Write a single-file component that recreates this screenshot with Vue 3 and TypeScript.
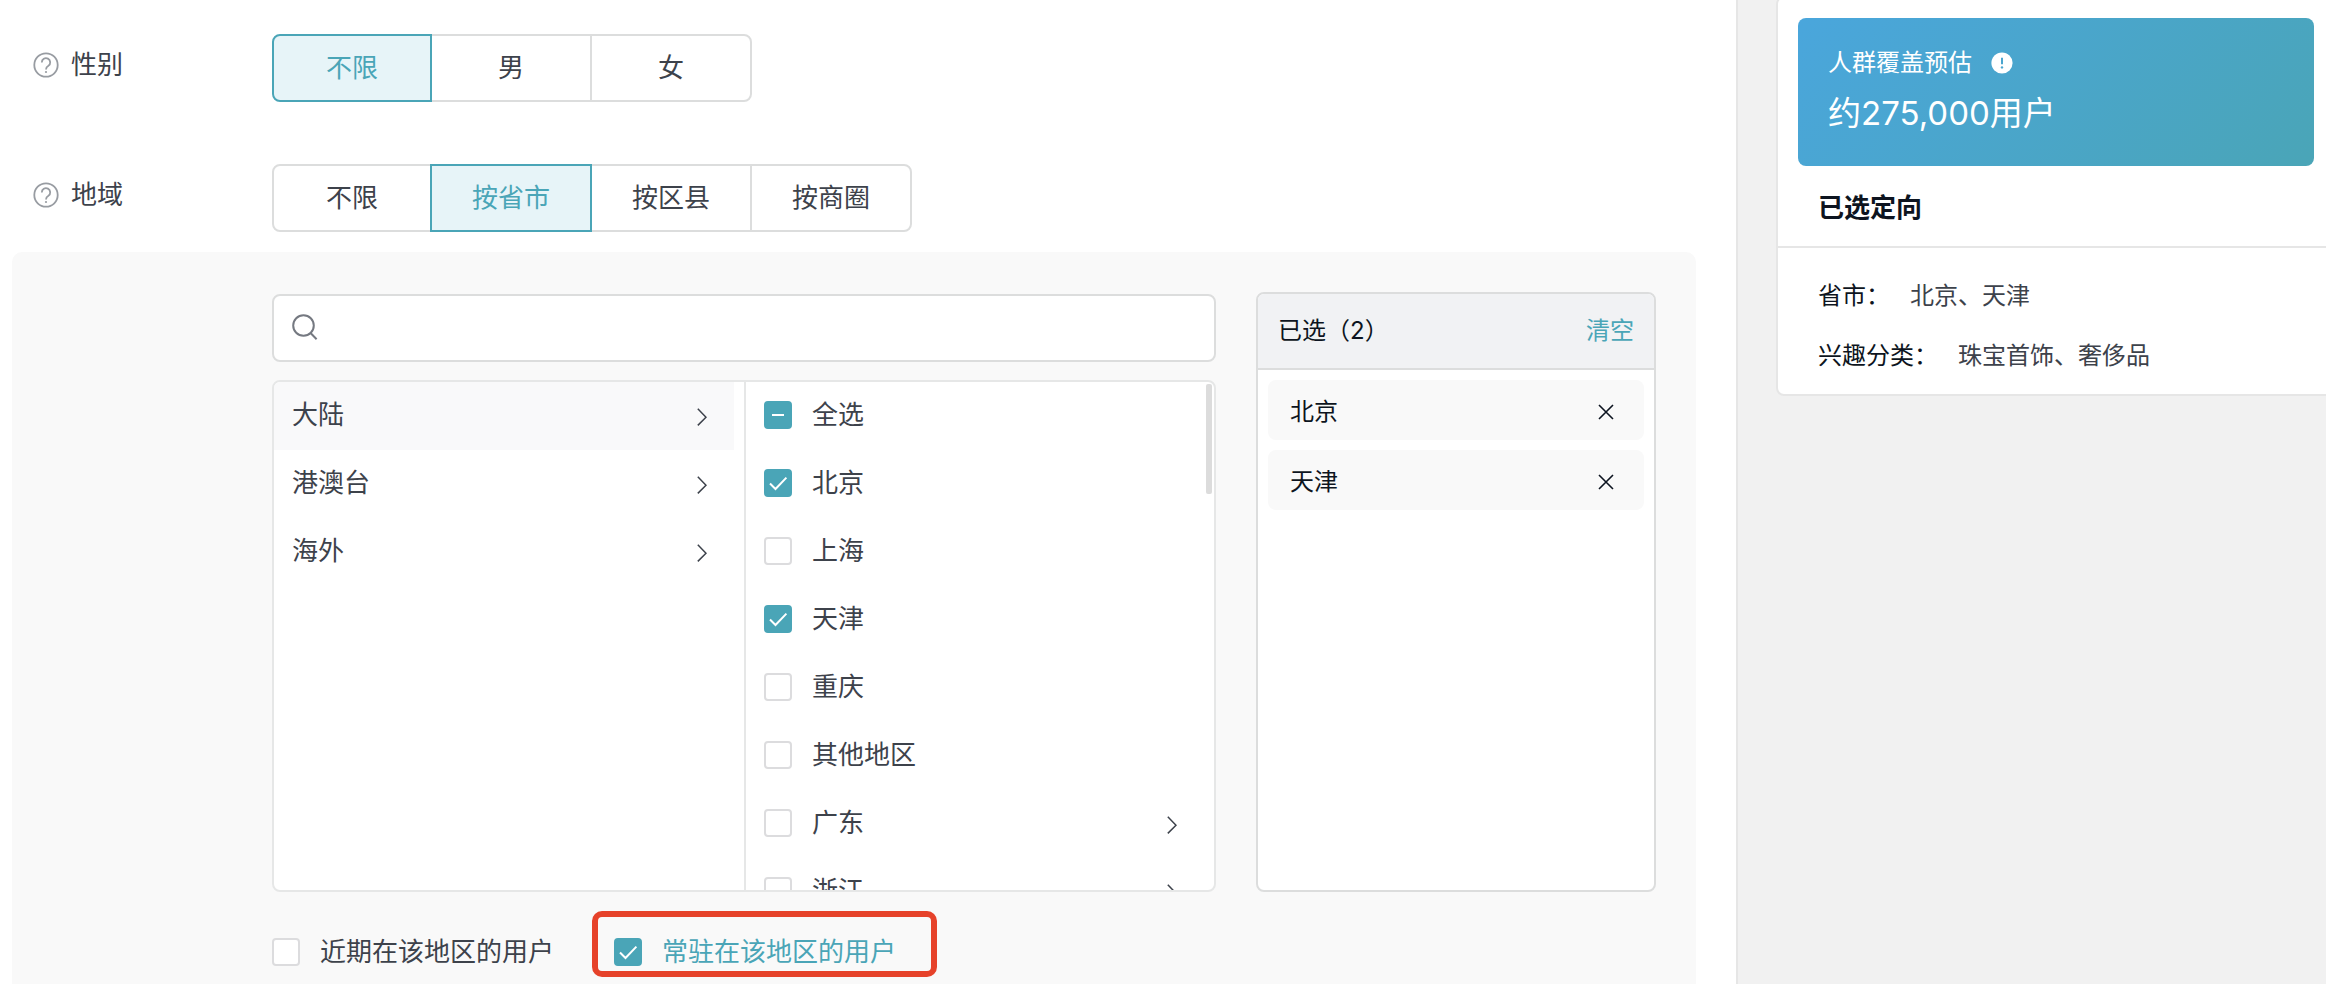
<script setup lang="ts">
import { computed, ref } from 'vue'

interface Region {
  name: string
  children?: boolean
}

const genders: string[] = ['不限', '男', '女']
const scopes: string[] = ['不限', '按省市', '按区县', '按商圈']
const areas: string[] = ['大陆', '港澳台', '海外']
const regions: Region[] = [
  { name: '北京' },
  { name: '上海' },
  { name: '天津' },
  { name: '重庆' },
  { name: '其他地区' },
  { name: '广东', children: true },
  { name: '浙江', children: true },
]

const gender = ref('不限')
const scope = ref('按省市')
const area = ref('大陆')
const keyword = ref('')
const selected = ref<string[]>(['北京', '天津'])
const recent = ref(false)
const resident = ref(true)

const allSelected = computed(() => selected.value.length === regions.length)
const partlySelected = computed(() => selected.value.length > 0 && !allSelected.value)

function toggleAll() {
  selected.value = allSelected.value ? [] : regions.map((r) => r.name)
}
function remove(name: string) {
  selected.value = selected.value.filter((n) => n !== name)
}
</script>

<template>
  <div class="page">
    <main class="main">
      <section class="field">
        <div class="field-label">
          <svg class="help" viewBox="0 0 26 26" aria-hidden="true">
            <circle cx="13" cy="13" r="11.7" />
            <path d="M8.8 10.4a4.2 4.2 0 1 1 6.6 3.4c-1.6 1-2.4 1.8-2.4 3.6" />
            <circle class="dot" cx="13" cy="20" r="1.1" />
          </svg>
          <span>性别</span>
        </div>
        <div class="segments" role="group" aria-label="性别">
          <button
            v-for="g in genders"
            :key="g"
            type="button"
            class="segment"
            :class="{ active: g === gender }"
            @click="gender = g"
          >{{ g }}</button>
        </div>
      </section>

      <section class="field">
        <div class="field-label">
          <svg class="help" viewBox="0 0 26 26" aria-hidden="true">
            <circle cx="13" cy="13" r="11.7" />
            <path d="M8.8 10.4a4.2 4.2 0 1 1 6.6 3.4c-1.6 1-2.4 1.8-2.4 3.6" />
            <circle class="dot" cx="13" cy="20" r="1.1" />
          </svg>
          <span>地域</span>
        </div>
        <div class="segments" role="group" aria-label="地域">
          <button
            v-for="s in scopes"
            :key="s"
            type="button"
            class="segment"
            :class="{ active: s === scope }"
            @click="scope = s"
          >{{ s }}</button>
        </div>
      </section>

      <section class="panel">
        <div class="pickers">
          <div class="picker">
            <div class="search">
              <svg class="search-icon" viewBox="0 0 26 26" aria-hidden="true">
                <circle cx="11.5" cy="11.5" r="10.3" />
                <path d="M18.8 19.2l5.8 6" />
              </svg>
              <input v-model="keyword" type="text" aria-label="搜索地区" />
            </div>

            <div class="cascader">
              <ul class="column">
                <li v-for="a in areas" :key="a">
                  <button type="button" class="row area" :class="{ active: a === area }" @click="area = a">
                    <span class="row-text">{{ a }}</span>
                    <svg class="chevron" viewBox="0 0 10 18" aria-hidden="true"><path d="M.8 .8L9 9.2L.8 17.4" /></svg>
                  </button>
                </li>
              </ul>
              <ul class="column">
                <li class="row">
                  <label class="check">
                    <span class="box">
                      <input
                        type="checkbox"
                        :checked="allSelected"
                        :indeterminate="partlySelected"
                        @change="toggleAll"
                      />
                      <svg viewBox="0 0 28 28" aria-hidden="true">
                        <path v-if="partlySelected" d="M8 14H20" />
                        <path v-else-if="allSelected" d="M6 14.5l5.5 5.5L22.4 8.6" />
                      </svg>
                    </span>
                    <span>全选</span>
                  </label>
                </li>
                <li v-for="r in regions" :key="r.name" class="row">
                  <label class="check">
                    <span class="box">
                      <input v-model="selected" type="checkbox" :value="r.name" />
                      <svg viewBox="0 0 28 28" aria-hidden="true">
                        <path v-if="selected.includes(r.name)" d="M6 14.5l5.5 5.5L22.4 8.6" />
                      </svg>
                    </span>
                    <span>{{ r.name }}</span>
                  </label>
                  <svg v-if="r.children" class="chevron" viewBox="0 0 10 18" aria-hidden="true"><path d="M.8 .8L9 9.2L.8 17.4" /></svg>
                </li>
              </ul>
              <span class="thumb"></span>
            </div>
          </div>

          <div class="chosen">
            <header class="chosen-head">
              <span>已选（{{ selected.length }}）</span>
              <button type="button" class="clear" @click="selected = []">清空</button>
            </header>
            <ul class="chosen-list">
              <li v-for="n in selected" :key="n" class="chosen-item">
                <span>{{ n }}</span>
                <button type="button" class="remove" :aria-label="'移除' + n" @click="remove(n)">
                  <svg viewBox="0 0 16 16" aria-hidden="true"><path d="M1 1L15 15M15 1L1 15" /></svg>
                </button>
              </li>
            </ul>
          </div>
        </div>

        <div class="options">
          <label class="check">
            <span class="box">
              <input v-model="recent" type="checkbox" />
              <svg viewBox="0 0 28 28" aria-hidden="true"><path v-if="recent" d="M6 14.5l5.5 5.5L22.4 8.6" /></svg>
            </span>
            <span>近期在该地区的用户</span>
          </label>
          <label class="check marked" :class="{ on: resident }">
            <span class="box">
              <input v-model="resident" type="checkbox" />
              <svg viewBox="0 0 28 28" aria-hidden="true"><path v-if="resident" d="M6 14.5l5.5 5.5L22.4 8.6" /></svg>
            </span>
            <span>常驻在该地区的用户</span>
          </label>
        </div>
      </section>
    </main>

    <aside class="side">
      <div class="card">
        <div class="banner">
          <div class="banner-title">
            <span>人群覆盖预估</span>
            <svg class="info" viewBox="0 0 22 22" aria-hidden="true">
              <circle cx="11" cy="11" r="10.6" fill="#fff" />
              <path d="M11 5.8v6.4" stroke="#4ba5cf" stroke-width="2" />
              <circle cx="11" cy="15.4" r="1.2" fill="#4ba5cf" />
            </svg>
          </div>
          <div class="banner-value">约275,000用户</div>
        </div>
        <h2 class="card-title">已选定向</h2>
        <dl class="facts">
          <div class="fact">
            <dt>省市：</dt>
            <dd>{{ selected.join('、') }}</dd>
          </div>
          <div class="fact">
            <dt>兴趣分类：</dt>
            <dd>珠宝首饰、奢侈品</dd>
          </div>
        </dl>
      </div>
    </aside>
  </div>
</template>

<style>
body {
  margin: 0;
  background: #f1f1f1;
}
</style>

<style scoped>
.page {
  display: flex;
  min-height: 100vh;
  overflow: hidden;
  font-family: Inter, 'Noto Sans CJK SC', sans-serif;
  font-size: 26px;
  line-height: 36px;
  color: #3d424b;
}
.page * {
  box-sizing: border-box;
}
button,
input {
  font: inherit;
  color: inherit;
}
button {
  padding: 0;
  border: 0;
  background: none;
  cursor: pointer;
}
ul {
  margin: 0;
  padding: 0;
  list-style: none;
}
svg {
  fill: none;
  flex: none;
}

.main {
  flex: 1;
  display: flex;
  flex-direction: column;
  min-width: 0;
  padding: 34px 40px 0 12px;
  background: #fff;
}
.field {
  display: flex;
  height: 68px;
  margin-bottom: 62px;
}
.field + .field {
  margin-bottom: 20px;
}
.field-label {
  display: flex;
  align-items: center;
  gap: 12px;
  width: 260px;
  padding: 0 0 6px 21px;
}
.help {
  width: 26px;
  height: 26px;
  stroke: #989ca2;
  stroke-width: 1.8;
}
.help .dot {
  fill: #989ca2;
  stroke: none;
}
.segments {
  display: flex;
}
.segment {
  width: 162px;
  margin-left: -2px;
  border: 2px solid #dcdddd;
  background: #fff;
}
.segment:first-child {
  width: 160px;
  margin-left: 0;
  border-radius: 8px 0 0 8px;
}
.segment:last-child {
  border-radius: 0 8px 8px 0;
}
.segment.active {
  z-index: 1;
  border-color: #4aa5b7;
  background: #e7f4f8;
  color: #4aa5b7;
}

.panel {
  flex: 1;
  padding: 40px 40px 0 260px;
  border-radius: 10px 10px 0 0;
  background: #f9f9f9;
}
.pickers {
  display: flex;
  gap: 40px;
}
.picker {
  flex: 1;
  min-width: 0;
  padding-top: 2px;
}
.search {
  display: flex;
  align-items: center;
  gap: 12px;
  height: 68px;
  margin-bottom: 18px;
  padding: 0 18px 2px;
  border: 2px solid #dcdddd;
  border-radius: 8px;
  background: #fff;
}
.search-icon {
  width: 26px;
  height: 26px;
  stroke: #757981;
  stroke-width: 2;
}
.search input {
  flex: 1;
  border: 0;
  outline: 0;
  background: none;
}
.cascader {
  position: relative;
  display: grid;
  grid-template-columns: 1fr 1fr;
  height: 512px;
  border: 2px solid #e6e7e7;
  border-radius: 8px;
  background: #fff;
  overflow: hidden;
}
.column {
  padding-right: 10px;
  overflow-y: auto;
  scrollbar-width: none;
}
.column + .column {
  border-left: 2px solid #e6e7e7;
}
.row {
  display: flex;
  align-items: center;
  justify-content: space-between;
  width: 100%;
  height: 68px;
  padding: 2px 27px 0 18px;
}
.area.active {
  background: #f9f9fa;
}
.row-text,
.row .check {
  padding-bottom: 4px;
}
.chevron {
  width: 10px;
  height: 18px;
  stroke: #3d424b;
  stroke-width: 1.5;
}
.thumb {
  position: absolute;
  top: 2px;
  right: 2px;
  width: 6px;
  height: 110px;
  border-radius: 2px;
  background: #dcdcdc;
}

.check {
  display: flex;
  align-items: center;
  gap: 20px;
  cursor: pointer;
}
.box {
  display: grid;
  width: 28px;
  height: 28px;
}
.box input,
.box svg {
  grid-area: 1 / 1;
  width: 28px;
  height: 28px;
  margin: 0;
}
.box input {
  appearance: none;
  border: 2px solid #dcdcde;
  border-radius: 4px;
  background: #fff;
}
.box input:checked,
.box input:indeterminate {
  border-color: #4aa5b7;
  background: #4aa5b7;
}
.box svg {
  z-index: 1;
  stroke: #fff;
  stroke-width: 2;
  pointer-events: none;
}

.chosen {
  width: 400px;
  border: 2px solid #dcdddd;
  border-radius: 8px;
  background: #fff;
  font-size: 24px;
  color: #0d1420;
  overflow: hidden;
}
.chosen-head {
  display: flex;
  align-items: center;
  justify-content: space-between;
  height: 76px;
  padding: 0 20px;
  border-bottom: 2px solid #dcdddd;
  background: #f1f2f4;
}
.clear {
  color: #4aa5b7;
}
.chosen-list {
  display: flex;
  flex-direction: column;
  gap: 10px;
  padding: 10px;
}
.chosen-item {
  display: flex;
  align-items: center;
  justify-content: space-between;
  height: 60px;
  padding: 3px 30px 0 22px;
  border-radius: 8px;
  background: #f9f9f9;
}
.remove {
  display: flex;
}
.remove svg {
  width: 16px;
  height: 16px;
  stroke: #0d1420;
  stroke-width: 1.6;
}

.options {
  display: flex;
  gap: 60px;
  height: 28px;
  margin-top: 46px;
}
.on {
  color: #4aa5b7;
}
.marked {
  position: relative;
}
.marked::after {
  content: '';
  position: absolute;
  inset: -27px -41px -11px -22px;
  border: 6px solid #e6422a;
  border-radius: 10px;
  pointer-events: none;
}

.side {
  width: 590px;
  padding-left: 38px;
  border-left: 2px solid #e6e6e6;
  background: #f1f1f1;
}
.card {
  margin: -4px -10px 0 0;
  border: 2px solid #e6e6e6;
  border-radius: 8px;
  background: #fff;
}
.banner {
  height: 148px;
  margin: 20px 20px 0;
  padding: 27px 30px;
  border-radius: 8px;
  background: linear-gradient(135deg, #4aa6dc, #4aa5b7);
  color: #fff;
}
.banner-title {
  display: flex;
  align-items: center;
  gap: 19px;
  font-size: 24px;
}
.info {
  width: 22px;
  height: 22px;
}
.banner-value {
  margin-top: 8px;
  font-size: 33px;
  line-height: 48px;
}
.card-title {
  height: 82px;
  margin: 0;
  padding: 24px 40px 0;
  border-bottom: 2px solid #e6e6e6;
  font-size: 26px;
  font-weight: 700;
  color: #0d1420;
}
.facts {
  display: flex;
  flex-direction: column;
  gap: 24px;
  margin: 0;
  padding: 30px 40px 20px;
  font-size: 24px;
}
.fact {
  display: flex;
  gap: 20px;
}
dt {
  color: #0d1420;
}
dd {
  margin: 0;
}
</style>
